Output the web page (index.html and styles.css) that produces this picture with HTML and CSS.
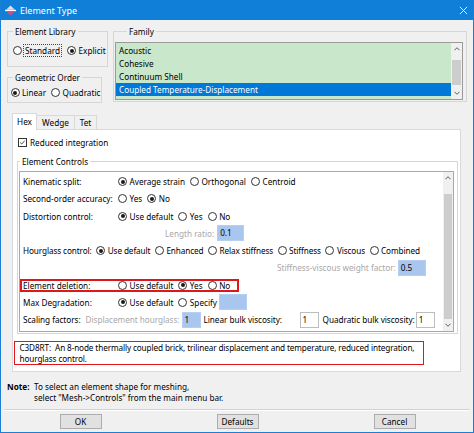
FILE: index.html
```html
<!DOCTYPE html>
<html>
<head>
<meta charset="utf-8">
<title>Element Type</title>
<link rel="stylesheet" href="styles.css">
</head>
<body>
<div class="win">
  <div class="titlebar">
    <svg class="appicon" viewBox="0 0 11 11"><polygon points="5.5,0.5 10,4.8 1,4.8" fill="#e3d6f0"/><rect x="0" y="4.8" width="11" height="1.4" fill="#ffffff"/><polygon points="1,6.2 10,6.2 5.5,10.5" fill="#c9508a"/></svg>
    <span class="title">Element Type</span>
    <svg class="close" viewBox="0 0 10 10"><path d="M1 1L9 9M9 1L1 9" stroke="#fff" stroke-width="1" fill="none"/></svg>
  </div>
  <div class="client">
    <div class="top">
      <div class="leftcol">
        <fieldset class="grp lib">
          <legend>Element Library</legend>
          <div class="opts">
            <span class="rb"><i class="radio"></i><span class="focus">Standard</span></span>
            <span class="rb gap-lib"><i class="radio on"></i>Explicit</span>
          </div>
        </fieldset>
        <fieldset class="grp geo">
          <legend>Geometric Order</legend>
          <div class="opts">
            <span class="rb"><i class="radio on"></i>Linear</span>
            <span class="rb gap-geo"><i class="radio"></i>Quadratic</span>
          </div>
        </fieldset>
      </div>
      <fieldset class="grp fam">
        <legend>Family</legend>
        <div class="listbox">
          <div class="items">
            <div class="item">Acoustic</div>
            <div class="item">Cohesive</div>
            <div class="item">Continuum Shell</div>
            <div class="item sel">Coupled Temperature-Displacement</div>
          </div>
          <div class="vscroll list-sb">
            <div class="arrow"><svg viewBox="0 0 7 4"><polyline points="0.5,3.5 3.5,0.5 6.5,3.5"/></svg></div>
            <div class="track"><div class="thumb"></div></div>
            <div class="arrow"><svg viewBox="0 0 7 4"><polyline points="0.5,0.5 3.5,3.5 6.5,0.5"/></svg></div>
          </div>
        </div>
      </fieldset>
    </div>

    <div class="tabs">
      <div class="tab sel t-hex">Hex</div>
      <div class="tab t-wedge">Wedge</div>
      <div class="tab t-tet">Tet</div>
    </div>
    <div class="panel">
      <div class="chk-row"><i class="check"><svg viewBox="0 0 9 9"><polyline points="1.5,4.5 3.5,6.5 7.5,2"/></svg></i>Reduced integration</div>
      <fieldset class="grp ctrl">
        <legend>Element Controls</legend>
        <div class="scrollarea">
          <div class="rows">
            <div class="row">
              <span class="lbl">Kinematic split:</span>
              <span class="rb"><i class="radio on"></i>Average strain</span>
              <span class="rb"><i class="radio"></i>Orthogonal</span>
              <span class="rb"><i class="radio"></i>Centroid</span>
            </div>
            <div class="row">
              <span class="lbl">Second-order accuracy:</span>
              <span class="rb"><i class="radio"></i>Yes</span>
              <span class="rb"><i class="radio on"></i>No</span>
            </div>
            <div class="row">
              <span class="lbl">Distortion control:</span>
              <span class="rb"><i class="radio on"></i>Use default</span>
              <span class="rb"><i class="radio"></i>Yes</span>
              <span class="rb"><i class="radio"></i>No</span>
            </div>
            <div class="row">
              <span class="dim lr">Length ratio:</span>
              <span class="inp blue w-lr">0.1</span>
            </div>
            <div class="row hg">
              <span class="lbl auto">Hourglass control:</span>
              <span class="rb"><i class="radio on"></i>Use default</span>
              <span class="rb"><i class="radio"></i>Enhanced</span>
              <span class="rb"><i class="radio"></i>Relax stiffness</span>
              <span class="rb"><i class="radio"></i>Stiffness</span>
              <span class="rb"><i class="radio"></i>Viscous</span>
              <span class="rb"><i class="radio"></i>Combined</span>
            </div>
            <div class="row">
              <span class="dim svw">Stiffness-viscous weight factor:</span>
              <span class="inp blue w-svw">0.5</span>
            </div>
            <div class="row">
              <div class="redbox">
                <span class="lbl">Element deletion:</span>
                <span class="rb"><i class="radio"></i>Use default</span>
                <span class="rb"><i class="radio on"></i>Yes</span>
                <span class="rb"><i class="radio"></i>No</span>
              </div>
            </div>
            <div class="row">
              <span class="lbl">Max Degradation:</span>
              <span class="rb"><i class="radio on"></i>Use default</span>
              <span class="rb"><i class="radio"></i>Specify</span>
              <span class="inp blue w-md"></span>
            </div>
            <div class="row sc">
              <span class="sf">Scaling factors:</span>
              <span class="dim dh">Displacement hourglass:</span>
              <span class="inp blue w-1">1</span>
              <span class="lbv">Linear bulk viscosity:</span>
              <span class="inp w-1">1</span>
              <span class="qbv">Quadratic bulk viscosity:</span>
              <span class="inp w-1">1</span>
            </div>
          </div>
          <div class="vscroll ctrl-sb">
            <div class="arrow"><svg viewBox="0 0 7 4"><polyline points="0.5,3.5 3.5,0.5 6.5,3.5"/></svg></div>
            <div class="track"><div class="thumb"></div></div>
            <div class="arrow"><svg viewBox="0 0 7 4"><polyline points="0.5,0.5 3.5,3.5 6.5,0.5"/></svg></div>
          </div>
        </div>
      </fieldset>
      <div class="desc">C3D8RT:&nbsp; An 8-node thermally coupled brick, trilinear displacement and temperature, reduced integration,<br>hourglass control.</div>
    </div>

    <div class="note">
      <span class="note-k">Note:</span>
      <div class="note-t">To select an element shape for meshing,<br>select "Mesh-&gt;Controls" from the main menu bar.</div>
    </div>
    <div class="sep"></div>
    <div class="buttons">
      <div class="btn-cell"><span class="btn">OK</span></div>
      <div class="btn-cell"><span class="btn">Defaults</span></div>
      <div class="btn-cell"><span class="btn">Cancel</span></div>
    </div>
  </div>
</div>
</body>
</html>
```

FILE: styles.css
```css
* { box-sizing: border-box; }
html, body { margin: 0; padding: 0; }
body {
  font-family: "Noto Sans", "Open Sans", sans-serif;
  font-size: 8.2px;
  color: #000;
  background: #ffffff;
}
.win {
  width: 474px;
  height: 433px;
  border: 1px solid #1b7fd6;
  border-top: none;
  background: #f0f0f0;
  display: flex;
  flex-direction: column;
  overflow: hidden;
}
.titlebar {
  height: 20px;
  flex: none;
  margin: 0 -1px;
  background: #0f7fd8;
  color: #fff;
  display: flex;
  align-items: center;
  padding: 0 6px 0 5px;
}
.appicon { width: 11px; height: 11px; margin-right: 4px; flex: none; }
.title { font-size: 9px; flex: 1; }
.close { width: 9px; height: 9px; flex: none; }

.client { flex: 1; display: flex; flex-direction: column; padding-top: 6px; }

/* group boxes */
.grp {
  margin: 0;
  border: 1px solid #d6d6d6;
  min-width: 0;
}
.grp > legend {
  padding: 0 2px;
  line-height: 11px;
  font-size: 8.2px;
}

.top { display: flex; align-items: flex-start; padding-left: 6px; flex: none; }
.leftcol { width: 101px; flex: none; display: flex; flex-direction: column; }
.lib { width: 101px; padding: 7px 0 8.5px 4.5px; }
.lib > legend { margin-left: 0.5px; }
.geo { width: 95px; margin-top: 5.5px; padding: 3px 0 2.5px 2.5px; }
.geo > legend { margin-left: 2.5px; }
.fam { width: 354px; margin-left: 5px; padding: 4.5px 3px 1px 1px; }
.fam > legend { margin-left: 12px; }

.opts { display: flex; align-items: center; height: 13px; }
.rb { display: inline-flex; align-items: center; white-space: nowrap; flex: none; }
.rb + .rb { margin-left: 5px; }
.radio {
  display: inline-block;
  position: relative;
  width: 9px;
  height: 9px;
  border: 1px solid #333;
  border-radius: 50%;
  background: #fff;
  margin-right: 2.5px;
  flex: none;
}
.radio.on::after {
  content: "";
  position: absolute;
  left: 1.5px;
  top: 1.5px;
  width: 4px;
  height: 4px;
  border-radius: 50%;
  background: #1a1a1a;
}
.focus { border: 1px dotted #444; padding: 0 1px; line-height: 11px; margin-left: -1px; }
.rb.gap-lib { margin-left: 5px; }
.rb.gap-geo { margin-left: 5px; }

/* listbox */
.listbox {
  height: 58px;
  border: 1px solid #9a9a9a;
  background: #c9e7cb;
  display: flex;
}
.items { flex: 1; padding-top: 1.5px; }
.item { height: 13px; line-height: 13px; padding-left: 3px; white-space: nowrap; }
.item.sel { background: #0078d7; color: #fff; }

.vscroll {
  flex: none;
  width: 11px;
  background: #f0f0f0;
  display: flex;
  flex-direction: column;
}
.vscroll .arrow {
  height: 12px;
  display: flex;
  align-items: center;
  justify-content: center;
  background: #f0f0f0;
}
.vscroll .arrow svg { width: 6px; height: 4px; }
.vscroll .arrow polyline { fill: none; stroke: #555; stroke-width: 1.1; }
.vscroll .track { flex: 1; display: flex; flex-direction: column; }
.list-sb .track { padding: 5px 0 2px; }
.list-sb .thumb { height: 25px; background: #cdcdcd; margin: 0 1px; }
.ctrl-sb { width: 10px; }
.ctrl-sb .track { padding-top: 10px; }
.ctrl-sb .thumb { flex: 1; background: #cdcdcd; margin: 0 1px; }

/* tabs */
.tabs { display: flex; align-items: flex-start; margin-top: 10px; padding-left: 11px; height: 16px; flex: none; }
.tab {
  height: 14px;
  margin-top: 2px;
  border: 1px solid #d9d9d9;
  border-bottom: none;
  background: #f0f0f0;
  text-align: center;
  line-height: 13px;
}
.tab + .tab { margin-left: -1px; }
.tab.sel {
  height: 17px;
  margin-top: 0;
  background: #fff;
  position: relative;
  z-index: 1;
  line-height: 16px;
}
.t-hex { width: 25px; }
.t-wedge { width: 39px; }
.t-tet { width: 23px; }

.panel {
  margin-left: 11px;
  width: 449px;
  height: 243px;
  background: #fff;
  border: 1px solid #d9d9d9;
  flex: none;
}
.chk-row { display: flex; align-items: center; height: 12px; margin-top: 7px; padding-left: 5px; }
.check {
  width: 9px;
  height: 9px;
  border: 1px solid #333;
  background: #fff;
  margin-right: 3px;
  display: flex;
}
.check svg { width: 7px; height: 7px; }
.check polyline { fill: none; stroke: #222; stroke-width: 1; }

.ctrl { margin: 7.5px 0 0 4px; width: 441px; padding: 3.5px 3px 1px 1px; }
.ctrl > legend { margin-left: 1px; }
.scrollarea {
  height: 161px;
  border: 1px solid #a8a8a8;
  background: #fff;
  display: flex;
}
.rows { flex: 1; padding-top: 1.5px; }
.row { display: flex; align-items: center; height: 17.25px; padding-left: 3px; white-space: nowrap; }
.row.hg { letter-spacing: -0.1px; }
.row.hg .rb + .rb { margin-left: 4.5px; }
.lbl { width: 95px; flex: none; }
.lbl.auto { width: auto; margin-right: 4.5px; }
.dim { color: #a8a8a8; }
.lr { margin-left: 142px; margin-right: 3px; }
.svw { margin-left: 254px; margin-right: 2px; }
.inp {
  display: inline-block;
  height: 16px;
  line-height: 14px;
  border: 1px solid #bdbdbd;
  background: #fff;
  padding-left: 2px;
  flex: none;
  letter-spacing: 0;
}
.inp.blue { background: #a9c6ee; border-color: #b5cff2; }
.w-lr { width: 27px; }
.w-svw { width: 28px; }
.w-md { width: 28px; margin-left: 2px; }
.w-1 { width: 19px; }
.row.sc { letter-spacing: -0.04px; }
.sf { margin-right: 5px; }
.dh { margin-right: 2px; }
.lbv { width: 96px; margin-left: 3px; }
.qbv { margin-left: 4px; margin-right: 1px; }

.redbox {
  display: flex;
  align-items: center;
  height: 13px;
  margin-left: -3px;
  border: 2px solid #e0161b;
  padding: 0 7px 0 1px;
}

.desc {
  margin: 7px 0 0 1px;
  width: 410px;
  height: 24px;
  border: 1.5px solid #e0161b;
  padding: 0 0 0 4.5px;
  line-height: 11px;
  white-space: nowrap;
  letter-spacing: -0.12px;
  overflow: hidden;
}

.note { display: flex; margin-top: 9.5px; padding-left: 6px; line-height: 11px; flex: none; }
.note-k { font-weight: bold; width: 27px; flex: none; }
.sep { margin: 5.5px 3px 0 3px; border-top: 1px solid #d2d2d2; border-bottom: 1px solid #fff; flex: none; }
.buttons { display: grid; grid-template-columns: 1fr 1fr 1fr; margin-top: 3px; padding-left: 1px; flex: none; }
.btn-cell { display: flex; justify-content: center; }
.btn {
  width: 42px;
  height: 15px;
  line-height: 13px;
  text-align: center;
  background: #e1e1e1;
  border: 1px solid #adadad;
}
```
